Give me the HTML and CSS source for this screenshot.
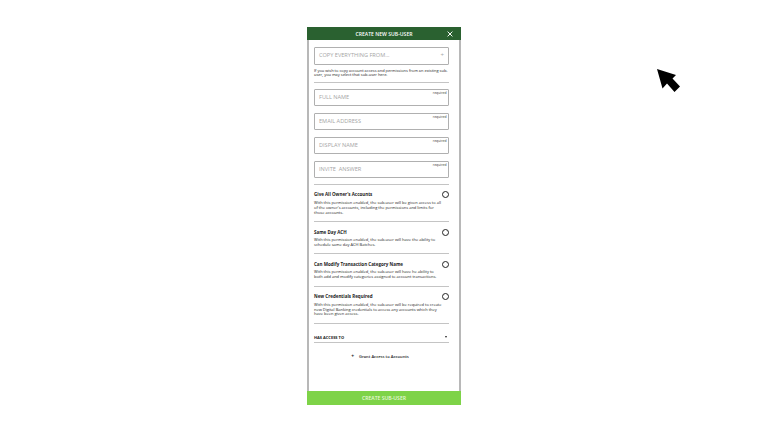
FILE: index.html
```html
<!DOCTYPE html>
<html lang="en">
<head>
    <meta charset="UTF-8">
    <title>Create New Sub-User</title>
    <link rel="stylesheet" href="styles.css">
</head>
<body>
    <div class="panel">
        <div class="panel-header">
            <span>CREATE NEW SUB-USER</span>
            <svg class="close" viewBox="0 0 10 10"><path d="M1 1L9 9M9 1L1 9" stroke="#fff" stroke-width="1.6" fill="none"/></svg>
        </div>
        <div class="panel-body">
            <div class="field copy-field">
                <span>COPY EVERYTHING FROM...</span>
                <span class="plus">+</span>
            </div>
            <p class="copy-note">If you wish to copy account access and permissions from an existing sub-user, you may select that sub-user here.</p>
            <div class="divider"></div>
            <div class="fields">
                <div class="field"><span>FULL NAME</span><small>required</small></div>
                <div class="field"><span>EMAIL ADDRESS</span><small>required</small></div>
                <div class="field"><span>DISPLAY NAME</span><small>required</small></div>
                <div class="field"><span>INVITE &nbsp;ANSWER</span><small>required</small></div>
            </div>
            <div class="divider fields-end"></div>
            <div class="perm">
                <div class="perm-text">
                    <h3>Give All Owner's Accounts</h3>
                    <p>With this permission enabled, the sub-user will be given access to all of the owner's accounts, including the permissions and limits for those accounts.</p>
                </div>
                <span class="radio"></span>
            </div>
            <div class="perm">
                <div class="perm-text">
                    <h3>Same Day ACH</h3>
                    <p>With this permission enabled, the sub-user will have the ability to schedule same day ACH Batches.</p>
                </div>
                <span class="radio"></span>
            </div>
            <div class="perm">
                <div class="perm-text">
                    <h3>Can Modify Transaction Category Name</h3>
                    <p>With this permission enabled, the sub-user will have he ability to<br>both add and modify categories assigned to account transactions.</p>
                </div>
                <span class="radio"></span>
            </div>
            <div class="perm">
                <div class="perm-text">
                    <h3>New Credentials Required</h3>
                    <p>With this permission enabled, the sub-user will be required to create new Digital Banking credentials to access any accounts which they have been given access.</p>
                </div>
                <span class="radio"></span>
            </div>
            <div class="access">
                <span>HAS ACCESS TO</span>
                <span class="caret"></span>
            </div>
            <div class="grant"><span class="grant-plus">+</span>Grant Access to Accounts</div>
        </div>
        <div class="panel-footer">CREATE SUB-USER</div>
    </div>
    <svg class="cursor" viewBox="0 0 24 24"><path d="M1 1L20 7L16.5 10.5L24 18.5L18.5 24L11 15.5L6.5 20.5Z" fill="#000"/></svg>
</body>
</html>
```

FILE: styles.css
```css
body {
    margin: 0;
    height: 432px;
    overflow: hidden;
    background-color: #fff;
    font-family: "Open Sans", Arial, sans-serif;
    color: #222;
    position: relative;
}

.panel {
    box-sizing: border-box;
    width: 154px;
    height: 378px;
    margin: 27px 0 0 307px;
    display: flex;
    flex-direction: column;
    border-left: 2px solid #b8b8b8;
    border-right: 2px solid #b8b8b8;
}

.panel-header {
    height: 13px;
    margin: 0 -2px;
    background-color: #2a6130;
    color: #fff;
    font-size: 5.1px;
    font-weight: 600;
    display: flex;
    align-items: center;
    justify-content: center;
    position: relative;
}

.close {
    position: absolute;
    right: 8px;
    top: 4px;
    width: 6px;
    height: 6px;
}

.panel-body {
    flex: 1;
    padding: 7px 10px 0 5px;
}

.field {
    box-sizing: border-box;
    height: 17.5px;
    border: 1px solid #b0b0b0;
    border-radius: 1px;
    padding: 0 4px 1.5px;
    display: flex;
    align-items: center;
    justify-content: space-between;
    color: #a5a5a5;
    font-size: 5.6px;
    position: relative;
}

.field small {
    position: absolute;
    top: 0;
    right: 1.5px;
    color: #333;
    font-size: 3.4px;
}

.copy-field {
    height: 18px;
}

.plus {
    font-size: 6px;
}

.copy-note {
    margin: 3.5px 0 0;
    font-size: 3.95px;
    line-height: 4.9px;
    color: #222;
}

.divider {
    height: 1px;
    background-color: #c4c4c4;
    margin-top: 3.5px;
}

.fields-end {
    margin-top: 5.5px;
}

.fields {
    display: flex;
    flex-direction: column;
    gap: 6.5px;
    margin-top: 6px;
}

.perm {
    display: flex;
    padding: 7.5px 0 5.5px;
    border-bottom: 1px solid #c4c4c4;
}

.perm-text {
    flex: none;
    width: 131px;
}

.perm h3 {
    margin: 0 0 3px;
    font-size: 4.5px;
    line-height: 5.5px;
    font-weight: 700;
}

.perm p {
    margin: 0;
    font-size: 4px;
    line-height: 4.9px;
}

.radio {
    box-sizing: border-box;
    flex: none;
    width: 7px;
    height: 7px;
    margin: -1px 0 0 -3px;
    border: 1px solid #222;
    border-radius: 50%;
}

.access {
    box-sizing: border-box;
    display: flex;
    align-items: flex-end;
    justify-content: space-between;
    height: 19px;
    padding-bottom: 2px;
    border-bottom: 1px solid #c4c4c4;
    font-size: 4px;
    font-weight: 700;
}

.caret {
    width: 0;
    height: 0;
    margin: 0 2px 2px 0;
    border-left: 1.8px solid transparent;
    border-right: 1.8px solid transparent;
    border-top: 2px solid #222;
}

.grant {
    margin-top: 10px;
    padding-right: 3px;
    text-align: center;
    font-size: 4.1px;
    font-weight: 600;
}

.grant-plus {
    margin-right: 5px;
    font-size: 5px;
    font-weight: 700;
}

.panel-footer {
    height: 14px;
    margin: 0 -2px;
    background-color: #7ed348;
    color: #e8f7dc;
    font-size: 5.1px;
    font-weight: 600;
    display: flex;
    align-items: center;
    justify-content: center;
}

.cursor {
    position: absolute;
    left: 656px;
    top: 68px;
    width: 24px;
    height: 24px;
}
```
